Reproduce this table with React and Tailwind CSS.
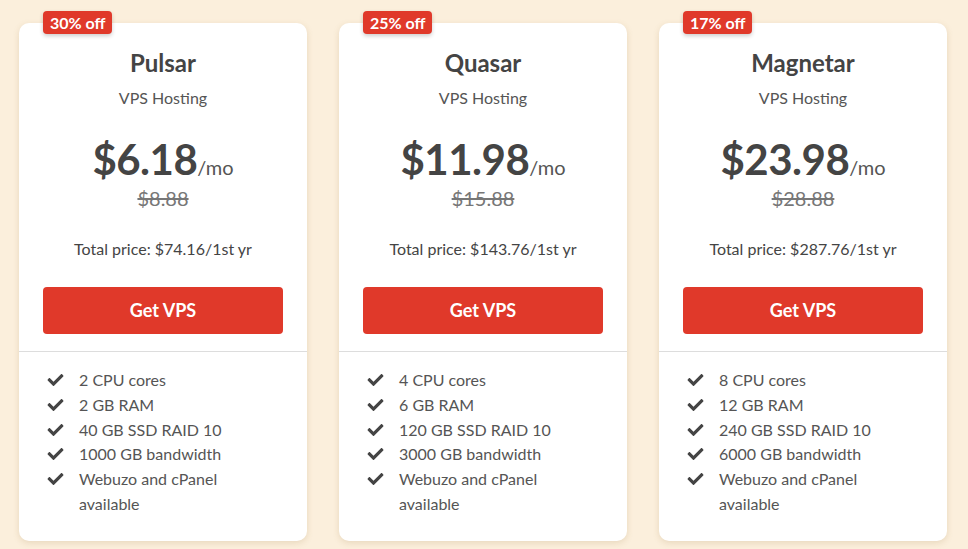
import React from "react";
import { FaCheck } from "react-icons/fa";

const plans = [
  { name: "Pulsar", off: "30% off", price: "$6.18", old: "$8.88", total: "$74.16", feats: ["2 CPU cores", "2 GB RAM", "40 GB SSD RAID 10", "1000 GB bandwidth", "Webuzo and cPanel available"] },
  { name: "Quasar", off: "25% off", price: "$11.98", old: "$15.88", total: "$143.76", feats: ["4 CPU cores", "6 GB RAM", "120 GB SSD RAID 10", "3000 GB bandwidth", "Webuzo and cPanel available"] },
  { name: "Magnetar", off: "17% off", price: "$23.98", old: "$28.88", total: "$287.76", feats: ["8 CPU cores", "12 GB RAM", "240 GB SSD RAID 10", "6000 GB bandwidth", "Webuzo and cPanel available"] },
];

function Card({ p }) {
  return (
    <div className="relative w-[288px] h-[518px] bg-white rounded-[10px] shadow-[0_2px_6px_rgba(150,110,50,0.18)] flex flex-col">
      <div className="absolute left-[24px] top-[-12px] bg-[#e0392a] text-white font-bold text-[16px] leading-[23px] px-[7px] rounded-[4px] shadow-[0_2px_4px_rgba(0,0,0,0.2)]">
        {p.off}
      </div>
      <div className="flex flex-col items-center pt-[25px] px-[24px]">
        <div className="text-[24px] font-bold text-[#444] leading-[30px]">{p.name}</div>
        <div className="text-[16px] text-[#555] leading-[20px] mt-[10px]">VPS Hosting</div>
        <div className="flex items-baseline mt-[25px] text-[#444]">
          <span className="text-[42px] font-bold leading-[52px] tracking-[-0.5px]">{p.price}</span>
          <span className="text-[20px] text-[#555]">/mo</span>
        </div>
        <div className="text-[20px] text-[#777] line-through leading-[24px] mt-[1px]">{p.old}</div>
        <div className="text-[16px] text-[#444] leading-[20px] mt-[29px]">Total price: {p.total}/1st yr</div>
        <button className="w-full h-[47px] mt-[28px] bg-[#e0392a] rounded-[4px] text-white font-bold text-[18px]">Get VPS</button>
      </div>
      <div className="mt-[17px] border-t border-[#ddd]" />
      <ul className="pt-[16px] pl-[28px] pr-[24px] text-[16px] text-[#555] leading-[24.8px]">
        {p.feats.map((f) => (
          <li key={f} className="flex">
            <FaCheck className="w-[17px] h-[16px] text-[#444] mt-[4px] mr-[15px] shrink-0" />
            <span className="w-[160px]">{f}</span>
          </li>
        ))}
      </ul>
    </div>
  );
}

export default function App() {
  return (
    <div className="w-[968px] h-[549px] bg-[#fbefdc] overflow-hidden" style={{ fontFamily: "Lato, 'Open Sans', sans-serif" }}>
      <div className="flex gap-[32px] pl-[19px] pt-[23px]">
        {plans.map((p) => <Card key={p.name} p={p} />)}
      </div>
    </div>
  );
}
